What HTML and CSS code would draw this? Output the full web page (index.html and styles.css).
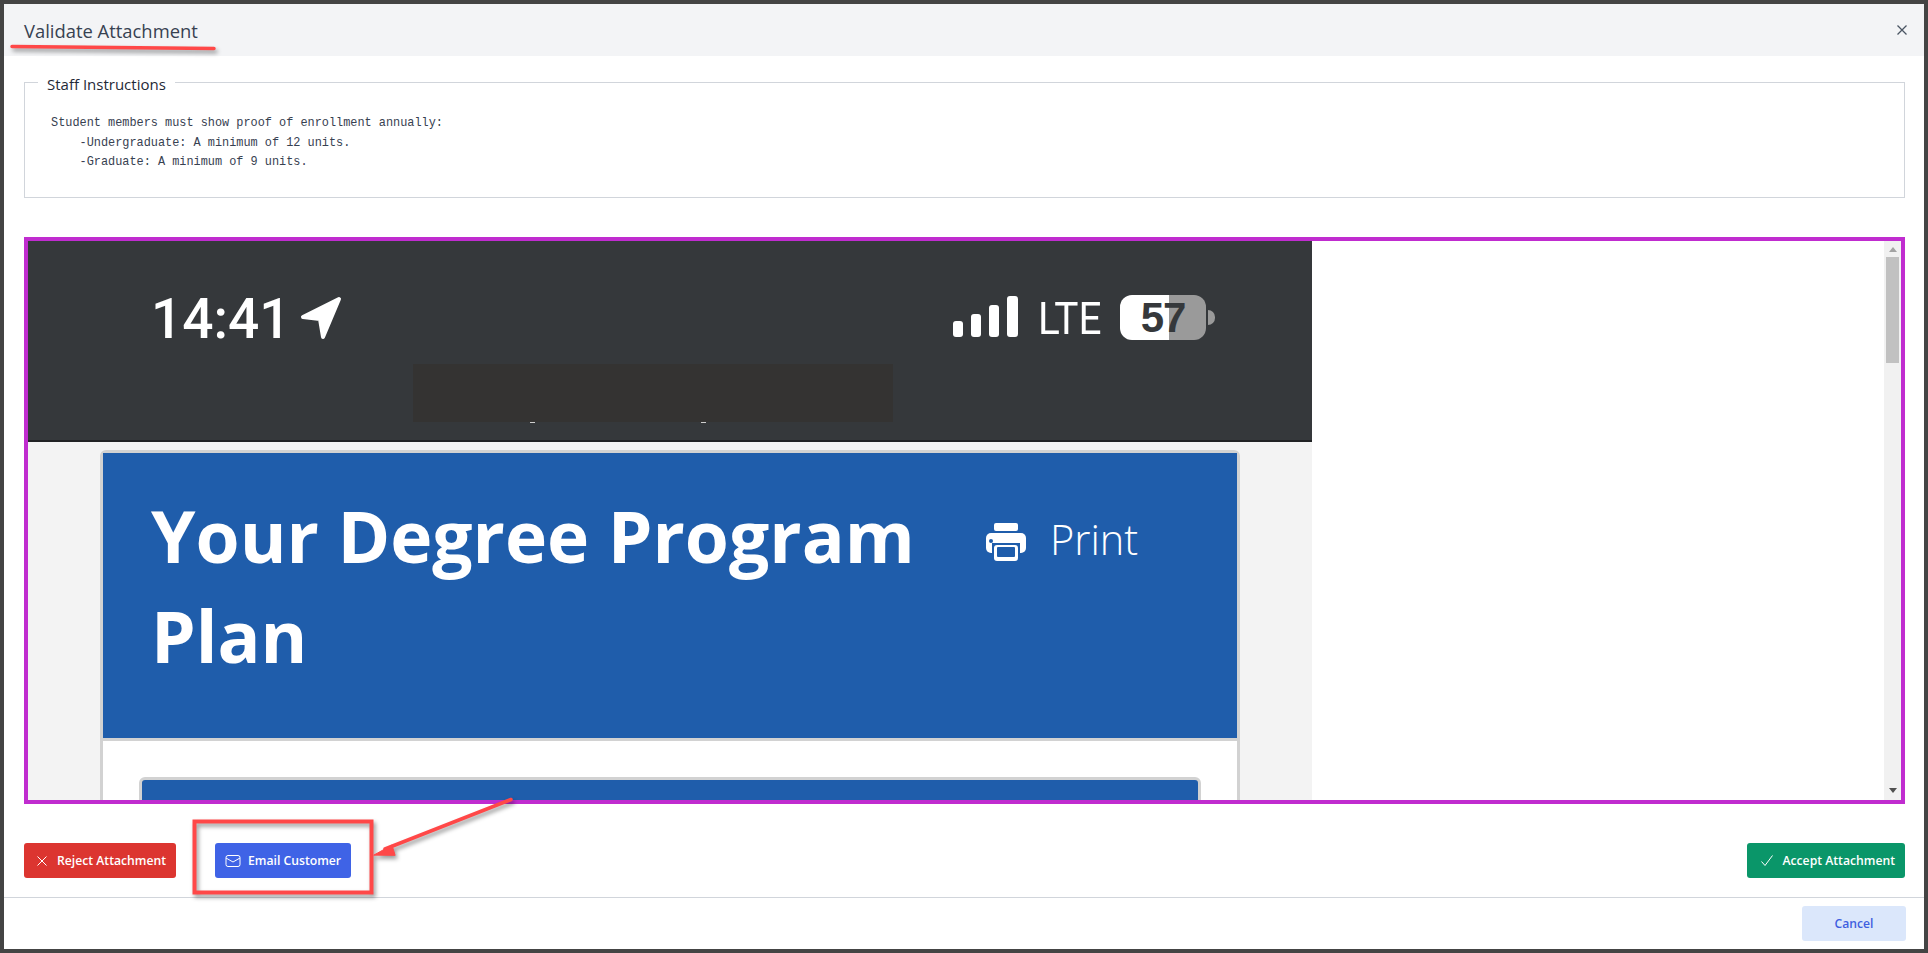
FILE: index.html
```html
<!DOCTYPE html>
<html lang="en">

<head>
  <meta charset="UTF-8" />
  <title>Validate Attachment</title>
  <link rel="stylesheet" href="styles.css">
</head>

<body>
  <div class="modal">
    <header class="modal-head">
      <h2>Validate Attachment</h2>
      <svg class="close" viewBox="0 0 10 10"><path d="M0.5 0.5L9.5 9.5M9.5 0.5L0.5 9.5" /></svg>
    </header>

    <main class="modal-body">
      <fieldset class="instructions">
        <legend>Staff Instructions</legend>
        <pre>Student members must show proof of enrollment annually:
    -Undergraduate: A minimum of 12 units.
    -Graduate: A minimum of 9 units.</pre>
      </fieldset>

      <div class="preview">
        <div class="doc">
          <div class="status">
            <div class="status-row">
              <span class="time">14:41</span>
              <svg class="locate" viewBox="0 0 44 44"><path d="M40 3L4 21L21 23L24 41Z" /></svg>
              <div class="signal">
                <i class="s1"></i><i class="s2"></i><i class="s3"></i><i class="s4"></i>
              </div>
              <span class="lte">LTE</span>
              <div class="battery">57</div>
              <div class="battery-nub"></div>
            </div>
            <div class="redacted"><i class="speck-a"></i><i class="speck-b"></i></div>
          </div>
          <div class="page">
            <div class="card">
              <div class="hero">
                <h1>Your Degree Program Plan</h1>
                <div class="print">
                  <svg viewBox="0 0 40 38">
                    <rect x="8" y="0" width="24" height="8" rx="2" fill="#fff" />
                    <rect x="0" y="10" width="40" height="20" rx="5" fill="#fff" />
                    <circle cx="5" cy="18" r="2" fill="#1f5dab" />
                    <rect x="6" y="20" width="28" height="18" fill="#1f5dab" />
                    <rect x="8" y="22" width="24" height="16" rx="3" fill="#fff" />
                    <rect x="11" y="24" width="18" height="10" rx="1" fill="#1f5dab" />
                  </svg>
                  <span>Print</span>
                </div>
              </div>
              <div class="card-body">
                <div class="inner-card"></div>
              </div>
            </div>
          </div>
        </div>
        <div class="blank"></div>
        <div class="scrollbar">
          <i class="arrow-up"></i>
          <div class="thumb"></div>
          <i class="arrow-down"></i>
        </div>
      </div>

      <div class="actions">
        <button class="btn btn-red">
          <svg viewBox="0 0 16 16"><path d="M3.5 3.5L12.5 12.5M12.5 3.5L3.5 12.5" /></svg>
          Reject Attachment
        </button>
        <button class="btn btn-blue">
          <svg viewBox="0 0 16 16"><rect x="1" y="2.5" width="14" height="11" rx="2" /><path d="M1 5L8 9L15 5" /></svg>
          Email Customer
        </button>
        <button class="btn btn-green">
          <svg viewBox="0 0 16 16"><path d="M2.5 8.5L6 12.5L13.5 2.5" /></svg>
          Accept Attachment
        </button>
      </div>
    </main>

    <footer class="modal-foot">
      <button class="btn-cancel">Cancel</button>
    </footer>
  </div>

  <!-- red markup drawn on top of the screenshot -->
  <svg class="markup" viewBox="0 0 1928 953">
    <path d="M12 46.5L214 48.5" stroke-width="3.5" />
    <rect x="194.5" y="821.5" width="177" height="71" stroke-width="4" />
    <path d="M511 799.5L385 849" stroke-width="3.5" />
    <path d="M374 855L392 845L395 855Z" class="head" />
  </svg>
</body>

</html>
```

FILE: styles.css
```css
* {
  box-sizing: border-box;
  margin: 0;
  padding: 0;
}

body {
  width: 1928px;
  height: 953px;
  padding: 4px;
  background: #444;
  overflow: hidden;
  font-family: 'Open Sans', sans-serif;
}

.modal {
  height: 945px;
  background: #fff;
  display: flex;
  flex-direction: column;
}

/* Header */
.modal-head {
  height: 52px;
  flex: none;
  background: #f3f4f6;
  display: flex;
  align-items: center;
  justify-content: space-between;
  padding: 0 17px 0 20px;
}

.modal-head h2 {
  font-size: 18.4px;
  font-weight: 400;
  color: #374151;
}

.close {
  width: 10px;
  height: 10px;
  margin-top: -1px;
}

.close path {
  stroke: #4b5563;
  stroke-width: 1.3;
  fill: none;
}

/* Body */
.modal-body {
  flex: 1;
  padding: 14px 19px 0 20px;
}

.instructions {
  height: 128px;
  border: 1px solid #d1d5db;
  padding: 0 0 0 26px;
}

.instructions legend {
  margin-left: -13px;
  padding: 4px 9px 0;
  font-size: 15px;
  line-height: 20px;
  color: #1f2937;
}

.instructions pre {
  margin-top: 20px;
  font-family: 'Liberation Mono', monospace;
  font-size: 11.88px;
  line-height: 19.5px;
  color: #374151;
}

/* Attachment preview */
.preview {
  height: 567px;
  margin-top: 39px;
  border: 4px solid #c02ccf;
  display: flex;
  overflow: hidden;
}

.doc {
  width: 1284px;
  flex: none;
  background: #f3f3f3;
  overflow: hidden;
}

.blank {
  flex: 1;
  background: #fff;
}

.scrollbar {
  width: 17px;
  flex: none;
  background: #f1f1f1;
  padding: 5px 2px;
  display: flex;
  flex-direction: column;
  align-items: center;
}

.thumb {
  width: 13px;
  height: 106px;
  margin-top: 5px;
  margin-bottom: auto;
  background: #c1c1c1;
}

.arrow-up {
  border: 4px solid transparent;
  border-top: 0;
  border-bottom: 5px solid #a3a3a3;
  margin-top: 1px;
}

.arrow-down {
  border: 4px solid transparent;
  border-bottom: 0;
  border-top: 5px solid #505050;
  margin-bottom: 2px;
}

/* Phone status bar */
.status {
  position: relative;
  height: 201px;
  background: #35383b;
  border-bottom: 2px solid #202224;
  color: #fff;
}

.status-row {
  height: 152px;
  padding: 0 97px 0 123px;
  display: flex;
  align-items: center;
}

.time {
  margin-top: 4px;
  font-family: Roboto, sans-serif;
  font-size: 55px;
  font-weight: 500;
  line-height: 60px;
}

.locate {
  width: 44px;
  height: 44px;
  margin-left: 8px;
  margin-top: 2px;
}

.locate path {
  fill: #fff;
  stroke: #fff;
  stroke-width: 4;
  stroke-linejoin: round;
}

.signal {
  margin-left: auto;
  display: flex;
  align-items: flex-end;
  gap: 8px;
  height: 41px;
  margin-top: -1px;
}

.signal i {
  display: block;
  width: 10px;
  background: #fff;
  border-radius: 3px;
}

.s1 { height: 16px; }
.s2 { height: 23px; }
.s3 { height: 32px; }
.s4 { height: 41px; width: 11px !important; }

.lte {
  width: 61px;
  margin-left: 20px;
  margin-top: 3px;
  font-family: Roboto, sans-serif;
  font-size: 45px;
  line-height: 44px;
  transform: scaleX(0.9);
  transform-origin: left center;
}

.battery {
  width: 86px;
  height: 45px;
  margin-left: 21px;
  border-radius: 12px;
  background: linear-gradient(90deg, #fff 57%, #9a9a9a 57%);
  color: #35383b;
  font-family: 'Liberation Sans', sans-serif;
  font-weight: 700;
  font-size: 42px;
  line-height: 45px;
  text-align: center;
  letter-spacing: -1px;
}

.battery-nub {
  width: 7px;
  height: 15px;
  margin-left: 2px;
  background: #9a9a9a;
  border-radius: 0 8px 8px 0;
}

.redacted {
  position: absolute;
  left: 385px;
  top: 123px;
  width: 480px;
  height: 58px;
  background: #343332;
}

.redacted i {
  position: absolute;
  top: 58px;
  width: 5px;
  height: 1px;
  background: #cfcfcf;
}

.speck-a { left: 117px; }
.speck-b { left: 288px; }

/* Scanned page */
.page {
  padding: 8px 72px 0;
}

.card {
  border: 3px solid #d2d2d2;
  border-radius: 6px;
  background: #fff;
  height: 600px;
}

.hero {
  height: 288px;
  background: #1f5dab;
  border-bottom: 3px solid #d2d2d2;
  color: #fff;
  display: flex;
  padding: 33px 0 0 48px;
}

.hero h1 {
  width: 835px;
  font-size: 71.3px;
  font-weight: 700;
  line-height: 100px;
}

.print {
  display: flex;
  gap: 24px;
  align-items: flex-start;
  padding-top: 37px;
  font-size: 41.5px;
  font-weight: 300;
  line-height: 38px;
}

.print svg {
  width: 40px;
  height: 38px;
}

.print span {
  margin-top: -3px;
}

.card-body {
  padding: 36px 36px 0;
}

.inner-card {
  height: 200px;
  border: 3px solid #d2d2d2;
  border-radius: 6px;
  background: #1f5dab;
}

/* Buttons */
.actions {
  margin-top: 39px;
  display: flex;
  gap: 39px;
}

.btn {
  height: 35px;
  padding: 0 10px;
  border: none;
  border-radius: 3px;
  color: #fff;
  font-family: 'Open Sans', sans-serif;
  font-size: 12.2px;
  font-weight: 600;
  display: flex;
  align-items: center;
  gap: 7px;
}

.btn svg {
  width: 16px;
  height: 16px;
  fill: none;
  stroke: #fff;
  stroke-width: 1;
}

.btn-red { background: #dc3530; }
.btn-blue { background: #3f63e6; }
.btn-green { background: #0a9669; margin-left: auto; padding-left: 12px; }

/* Footer */
.modal-foot {
  height: 52px;
  flex: none;
  border-top: 1px solid #d1d5db;
  padding: 8px 18px 0 0;
  display: flex;
  justify-content: flex-end;
}

.btn-cancel {
  width: 104px;
  height: 35px;
  border: none;
  border-radius: 3px;
  background: #dbe7fb;
  color: #3f5fe0;
  font-family: 'Open Sans', sans-serif;
  font-size: 12.2px;
  font-weight: 600;
}

/* Markup overlay */
.markup {
  position: absolute;
  left: 0;
  top: 0;
  width: 1928px;
  height: 953px;
  pointer-events: none;
  filter: drop-shadow(2px 3px 2px rgba(0, 0, 0, 0.4));
}

.markup path,
.markup rect {
  fill: none;
  stroke: #ff4848;
  stroke-linecap: round;
}

.markup .head {
  fill: #ff4848;
  stroke-width: 1;
}
```
